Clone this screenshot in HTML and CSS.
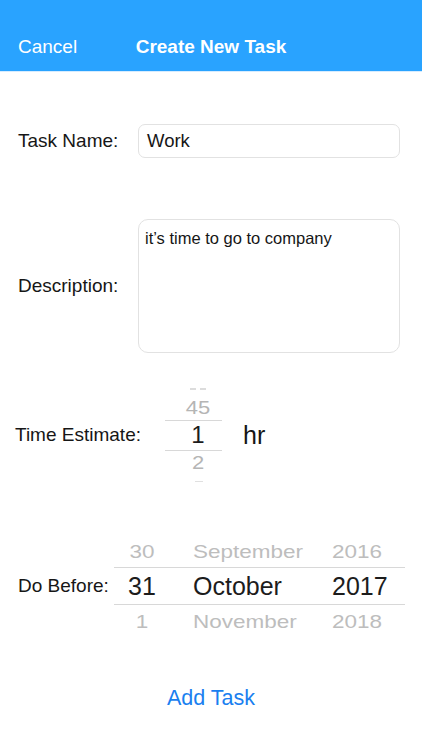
FILE: index.html
```html
<!DOCTYPE html>
<html lang="en">
<head>
<meta charset="utf-8">
<title>Create New Task</title>
<link rel="stylesheet" href="styles.css">
</head>
<body>
<header class="navbar">
  <span class="nav-cancel">Cancel</span>
  <span class="nav-title">Create New Task</span>
</header>
<main class="form">
  <div class="row row-name">
    <label class="label label-wide">Task Name:</label>
    <div class="field">Work</div>
  </div>
  <div class="row row-desc">
    <label class="label label-wide">Description:</label>
    <div class="field field-area">it’s time to go to company</div>
  </div>
  <div class="row row-time">
    <label class="label label-time">Time Estimate:</label>
    <div class="wheel wheel-time">
      <div class="item faint faint-top"></div>
      <div class="item side">45</div>
      <div class="item sel">1</div>
      <div class="item side">2</div>
      <div class="item faint faint-bottom"></div>
    </div>
    <span class="unit">hr</span>
  </div>
  <div class="row row-date">
    <label class="label label-date">Do Before:</label>
    <div class="wheel wheel-date">
      <div class="drow side side-top">
        <span class="c-day">30</span><span class="c-month">September</span><span class="c-year">2016</span>
      </div>
      <div class="drow sel">
        <span class="c-day">31</span><span class="c-month">October</span><span class="c-year">2017</span>
      </div>
      <div class="drow side side-bottom">
        <span class="c-day">1</span><span class="c-month">November</span><span class="c-year">2018</span>
      </div>
    </div>
  </div>
  <div class="actions">
    <span class="add-btn">Add Task</span>
  </div>
</main>
</body>
</html>
```

FILE: styles.css
```css
html, body {
  margin: 0;
  padding: 0;
  background: #ffffff;
}
body {
  width: 422px;
  height: 750px;
  overflow: hidden;
  font-family: "Liberation Sans", Arial, sans-serif;
  color: #161616;
}
.navbar {
  height: 72px;
  box-sizing: border-box;
  padding-top: 22px;
  background: #29a3ff;
  border-bottom: 1px solid #d6ecff;
  display: flex;
  align-items: center;
  position: relative;
}
.nav-cancel {
  margin-left: 18px;
  font-size: 19px;
  color: #ffffff;
}
.nav-title {
  position: absolute;
  left: 0;
  right: 0;
  top: 22px;
  bottom: 0;
  display: flex;
  align-items: center;
  justify-content: center;
  font-size: 19px;
  font-weight: bold;
  color: #ffffff;
  pointer-events: none;
}
.form {
  display: flex;
  flex-direction: column;
  padding-top: 52px;
}
.row {
  display: flex;
  align-items: center;
  padding-left: 18px;
}
.label {
  font-size: 19px;
  color: #161616;
  flex: none;
}
.label-wide { width: 120px; }
.label-time { width: 150px; margin-left: -3px; }
.label-date { width: 96px; }
.field {
  width: 262px;
  height: 34px;
  box-sizing: border-box;
  border: 1px solid #e2e2e2;
  border-radius: 7px;
  padding: 0 8px;
  display: flex;
  align-items: center;
  font-size: 18.5px;
  color: #161616;
}
.field-area {
  height: 134px;
  border-radius: 10px;
  align-items: flex-start;
  padding: 9px 6px;
  font-size: 16.5px;
}
.row-desc { margin-top: 61px; }
.row-time { margin-top: 35px; }
.row-date { margin-top: 58px; }

.wheel {
  display: flex;
  flex-direction: column;
  justify-content: center;
  overflow: hidden;
}
.wheel-time {
  width: 57px;
  height: 94px;
}
.wheel-time .item {
  display: flex;
  align-items: center;
  justify-content: center;
  padding-left: 9px;
  flex: none;
}
.wheel-time .faint {
  height: 16px;
  position: relative;
}
.wheel-time .faint::before {
  content: "";
  position: absolute;
  left: 25px;
  width: 16px;
  height: 2px;
  border-left: 6px solid #dcdcdc;
  border-right: 6px solid #dcdcdc;
  box-sizing: border-box;
}
.wheel-time .faint-top::before { bottom: 6px; }
.wheel-time .faint-bottom::before {
  top: 6px;
  left: 30px;
  width: 8px;
  border: none;
  background: #e0e0e0;
}
.wheel-time .side {
  height: 24px;
  font-size: 22px;
  color: #b5b5b5;
  transform: scaleY(0.86);
}
.wheel-time .sel {
  height: 31px;
  box-sizing: border-box;
  border-top: 1px solid #d8d8d8;
  border-bottom: 1px solid #d8d8d8;
  font-size: 24px;
  color: #1c1c1c;
}
.unit {
  margin-left: 21px;
  font-size: 25px;
  color: #161616;
}
.wheel-date {
  width: 291px;
  height: 92px;
}
.drow {
  flex: none;
  display: grid;
  grid-template-columns: 56px 162px 73px;
  align-items: center;
}
.drow .c-day { text-align: center; }
.drow .c-month { padding-left: 23px; }
.drow .c-year { padding-left: 0; }
.drow.side {
  height: 34px;
  font-size: 22.5px;
  color: #bdbdbd;
}
.drow.side-top { transform: translateY(3px) scaleY(0.78); }
.drow.side-bottom { transform: translateY(1px) scaleY(0.78); }
.drow.sel {
  height: 38px;
  box-sizing: border-box;
  border-top: 1px solid #d8d8d8;
  border-bottom: 1px solid #d8d8d8;
  font-size: 25px;
  color: #1c1c1c;
}
.actions {
  margin-top: 51px;
  display: flex;
  justify-content: center;
}
.add-btn {
  font-size: 21.5px;
  line-height: 30px;
  color: #1a7ff0;
}
```
